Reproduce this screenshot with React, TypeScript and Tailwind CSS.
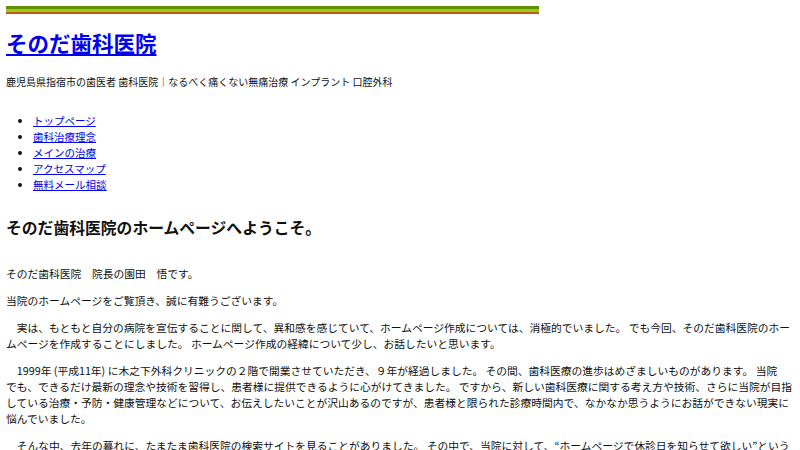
import React from "react";

const jp = { fontFamily: '"Noto Sans CJK JP", "Noto Sans", sans-serif' };
const S = "\u3000";

export default function App() {
  const links = ["トップページ", "歯科治療理念", "メインの治療", "アクセスマップ", "無料メール相談"];
  return (
    <div className="bg-white text-[#111] min-h-[450px] pl-[6px] pt-[6px] pr-[6px] overflow-hidden" style={jp}>
      <div className="w-[533px] flex flex-col">
        <div className="h-[3px] bg-[#5e8f05]" />
        <div className="h-[3px] bg-[#9ccc10]" />
        <div className="h-[2px] bg-[#c2571a]" />
      </div>

      <h1 className="mt-[17px] text-[21.5px] leading-[24px] font-bold">
        <a href="#" className="text-[#0000ee] underline">そのだ歯科医院</a>
      </h1>

      <p className="mt-[19px] text-[10px] leading-[16px]">
        鹿児島県指宿市の歯医者 歯科医院｜なるべく痛くない無痛治療 インプラント 口腔外科
      </p>

      <ul className="mt-[23px] list-disc pl-[27px] text-[10.5px] leading-[16px]">
        {links.map((l) => (
          <li key={l}>
            <a href="#" className="text-[#0000ee] underline">{l}</a>
          </li>
        ))}
      </ul>

      <h2 className="mt-[25px] text-[15.8px] leading-[20px] font-bold">
        そのだ歯科医院のホームページへようこそ。
      </h2>

      <div className="mt-[28px] w-[788px] text-[10.75px] leading-[16px] flex flex-col gap-[11px]">
        <p>そのだ歯科医院　院長の園田　悟です。</p>
        <p>当院のホームページをご覧頂き、誠に有難うございます。</p>
        <p>
          {S}実は、もともと自分の病院を宣伝することに関して、異和感を感じていて、ホームページ作成については、消極的でいました。 でも今回、そのだ歯科医院のホー
          <br />
          ムページを作成することにしました。 ホームページ作成の経緯について少し、お話したいと思います。
        </p>
        <p>
          {S}1999年 (平成11年) に木之下外科クリニックの２階で開業させていただき、９年が経過しました。 その間、歯科医療の進歩はめざましいものがあります。 当院
          <br />
          でも、できるだけ最新の理念や技術を習得し、患者様に提供できるように心がけてきました。 ですから、新しい歯科医療に関する考え方や技術、さらに当院が目指
          <br />
          している治療・予防・健康管理などについて、お伝えしたいことが沢山あるのですが、患者様と限られた診療時間内で、なかなか思うようにお話ができない現実に
          <br />
          悩んでいました。
        </p>
        <p>
          {S}そんな中、去年の暮れに、たまたま歯科医院の検索サイトを見ることがありました。 その中で、当院に対して、“ホームページで休診日を知らせて欲しい”という
          <br />
          ご意見が書き込まれていました。
        </p>
      </div>
    </div>
  );
}
